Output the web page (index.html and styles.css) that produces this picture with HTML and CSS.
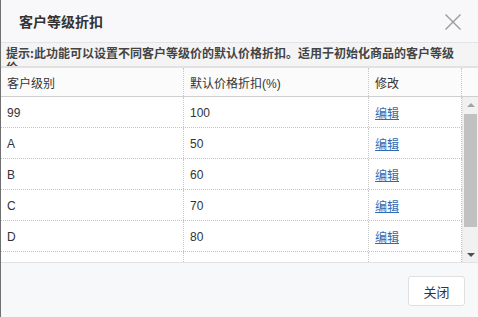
FILE: index.html
```html
<!DOCTYPE html>
<html lang="zh-CN">
<head>
<meta charset="utf-8">
<title>客户等级折扣</title>
<link rel="stylesheet" href="styles.css">
</head>
<body>
<div class="dialog">
  <div class="titlebar">
    <span class="title">客户等级折扣</span>
    <svg class="close-x" width="18" height="18" viewBox="0 0 18 18"><path d="M1.5 1.5 L16.5 16.5 M16.5 1.5 L1.5 16.5" stroke="#9a9a9a" stroke-width="1.4" fill="none"/></svg>
  </div>
  <div class="tip">提示:此功能可以设置不同客户等级价的默认价格折扣。适用于初始化商品的客户等级价</div>
  <div class="grid-head">
    <div class="hcell c1">客户级别</div>
    <div class="hcell c2">默认价格折扣(%)</div>
    <div class="hcell c3">修改</div>
    <div class="hcell c4"></div>
  </div>
  <div class="grid-body">
    <div class="rows">
      <div class="row"><div class="cell c1">99</div><div class="cell c2">100</div><div class="cell c3"><a href="#">编辑</a></div></div>
      <div class="row"><div class="cell c1">A</div><div class="cell c2">50</div><div class="cell c3"><a href="#">编辑</a></div></div>
      <div class="row"><div class="cell c1">B</div><div class="cell c2">60</div><div class="cell c3"><a href="#">编辑</a></div></div>
      <div class="row"><div class="cell c1">C</div><div class="cell c2">70</div><div class="cell c3"><a href="#">编辑</a></div></div>
      <div class="row"><div class="cell c1">D</div><div class="cell c2">80</div><div class="cell c3"><a href="#">编辑</a></div></div>
      <div class="row"><div class="cell c1">E</div><div class="cell c2">90</div><div class="cell c3"><a href="#">编辑</a></div></div>
    </div>
    <div class="scrollbar">
      <div class="arrow up"></div>
      <div class="thumb"></div>
      <div class="arrow down"></div>
    </div>
  </div>
  <div class="footer">
    <button class="btn">关闭</button>
  </div>
</div>
</body>
</html>
```
FILE: styles.css
```css
html, body {
  margin: 0;
  padding: 0;
  background: #ffffff;
}
body {
  font-family: "Liberation Sans", "Noto Sans CJK SC", sans-serif;
  font-size: 12px;
  color: #333333;
}
.dialog {
  width: 477px;
  height: 317px;
  border-left: 1px solid #707070;
  display: flex;
  flex-direction: column;
  overflow: hidden;
  background: #f7f8fa;
}
.titlebar {
  height: 42px;
  flex: none;
  display: flex;
  align-items: center;
  justify-content: space-between;
  padding: 0 16px 0 18px;
  border-bottom: 1px solid #e4e4e4;
  background: #f8f8fa;
}
.title {
  font-family: "Noto Sans CJK SC", sans-serif;
  font-size: 14px;
  font-weight: bold;
  color: #333;
  line-height: 16px;
}
.close-x {
  display: block;
  margin-top: 1px;
}
.tip {
  height: 23px;
  flex: none;
  box-sizing: border-box;
  padding: 3px 18px 0 5px;
  overflow: hidden;
  font-family: "Noto Sans CJK SC", sans-serif;
  font-weight: bold;
  font-size: 12px;
  line-height: 14px;
  color: #444;
  background: #f4f4f4;
}
.grid-head {
  height: 31px;
  flex: none;
  box-sizing: border-box;
  display: flex;
  border-top: 2px solid #e2e2e2;
  border-bottom: 1px solid #cfcfcf;
  background: #fbfbfb;
}
.hcell, .cell {
  box-sizing: border-box;
  padding-left: 6px;
  display: flex;
  align-items: center;
  border-right: 1px dotted #c8c8c8;
  font-family: "Liberation Sans", "Noto Sans CJK SC", sans-serif;
}
.c1 { width: 183px; }
.c2 { width: 185px; }
.c3 { width: 93px; }
.c4 { flex: 1; border-right: none; }
.grid-body {
  height: 165px;
  flex: none;
  display: flex;
  background: #ffffff;
  border-bottom: 1px solid #e2e2e2;
  overflow: hidden;
}
.rows {
  width: 461px;
  flex: none;
}
.row {
  height: 31px;
  box-sizing: border-box;
  display: flex;
  border-bottom: 1px dotted #c4c4c4;
}
.row .cell {
  padding-top: 1px;
}
.cell a {
  color: #2d6cb5;
  text-decoration: underline;
}
.scrollbar {
  flex: 1;
  display: flex;
  flex-direction: column;
  background: #f1f1f1;
  border-left: 1px solid #e8e8e8;
}
.arrow {
  height: 15px;
  flex: none;
  display: flex;
  align-items: center;
  justify-content: center;
}
.arrow.up::before {
  content: "";
  border-left: 4px solid transparent;
  border-right: 4px solid transparent;
  border-bottom: 4px solid #a3a3a3;
}
.arrow.down::before {
  content: "";
  border-left: 4px solid transparent;
  border-right: 4px solid transparent;
  border-top: 4px solid #505050;
}
.thumb {
  flex: 1;
  margin: 2px 1px 20px 1px;
  background: #c1c1c1;
}
.footer {
  flex: 1;
  display: flex;
  justify-content: flex-end;
  align-items: flex-start;
  padding: 13px 13px 0 0;
  background: #f7f8fa;
}
.btn {
  width: 57px;
  height: 30px;
  box-sizing: border-box;
  background: #ffffff;
  border: 1px solid #e0e0e0;
  border-radius: 3px;
  font-family: "Noto Sans CJK SC", sans-serif;
  font-size: 13px;
  color: #333;
  padding: 0;
}
```
